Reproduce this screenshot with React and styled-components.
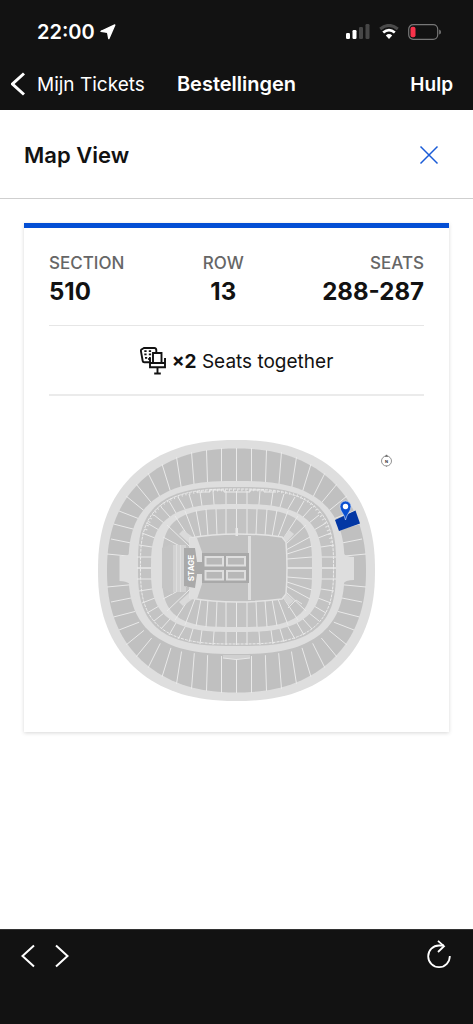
import React from "react";
import styled, { createGlobalStyle } from "styled-components";

const GlobalStyle = createGlobalStyle`
  * {
    box-sizing: border-box;
  }

  body {
    margin: 0;
    background: #fff;
    color: #121212;
    font-family: Inter, "Liberation Sans", sans-serif;
  }
`;

/* Stadium geometry */
const superellipse = (cx, cy, rx, ry, n) => {
  const points = [];
  for (let i = 0; i < 144; i++) {
    const t = (i / 144) * Math.PI * 2;
    const c = Math.cos(t);
    const s = Math.sin(t);
    const x = cx + rx * Math.sign(c) * Math.abs(c) ** (2 / n);
    const y = cy + ry * Math.sign(s) * Math.abs(s) ** (2 / n);
    points.push(`${x.toFixed(2)},${y.toFixed(2)}`);
  }
  return `M${points.join("L")}Z`;
};

// aisles of the upper right quarter: outer x, outer y, inner x, inner y
const upperAisles = [
  [236.5, 448, 236.5, 481],
  [251.5, 448, 251.5, 481],
  [266.5, 450, 265.5, 482],
  [281.5, 452, 279, 484],
  [296.5, 457, 292, 486],
  [311, 464, 303, 490],
  [325, 473, 314, 495],
  [337, 484, 323, 501],
  [347, 496, 331, 509],
  [354, 511, 336, 518],
  [359.5, 524, 340, 529],
  [362, 539, 342, 543],
  [366, 554, 345, 556],
];

const middleAisles = [
  [236.5, 491, 236.5, 504],
  [247, 491, 247, 504],
  [260, 491, 259, 504],
  [273, 492, 271, 506],
  [284, 494, 280, 507],
  [295, 497, 288, 509],
  [304, 501, 297, 513],
  [312, 507, 303, 517],
  [319, 515, 309, 523],
  [326, 523, 314, 530],
  [331, 533, 318, 538],
  [334, 545, 321, 547],
  [336, 557, 322, 557],
  [336, 568, 322, 568],
];

const lowerAisles = [
  [236.5, 509, 236.5, 536],
  [247, 509, 247, 536],
  [257, 509, 256, 535],
  [267, 509, 265, 536],
  [277, 510, 272, 537],
  [288, 511, 278, 537],
  [298, 516, 283, 539],
  [306, 525, 285, 545],
  [310, 537, 286, 550],
  [312, 546, 287, 554],
  [312, 557, 287, 559],
  [312, 568, 287, 568],
];

// the inner end runs on a little, under the ring that is drawn next
const toPath = (aisles) =>
  aisles
    .map(([x1, y1, x2, y2]) => `M${x1} ${y1}L${x2 + (x2 - x1) * 0.12} ${y2 + (y2 - y1) * 0.12}`)
    .join("");

const Aisles = ({ list, axis, leftList = list }) => (
  <g fill="none" stroke="#e9e9e9" strokeWidth="1">
    <path d={toPath(list)} />
    <path d={toPath(list)} transform={`translate(0 ${axis * 2}) scale(1 -1)`} />
    <path d={toPath(leftList)} transform="translate(473 0) scale(-1 1)" />
    <path d={toPath(leftList)} transform={`translate(473 ${axis * 2}) scale(-1 -1)`} />
  </g>
);

const StadiumMap = () => (
  <MapSvg viewBox="49 396 375 336" role="img" aria-label="Stadium map">
    <path d={superellipse(236.5, 570.5, 138.5, 130.5, 2.3)} fill="#dedede" />

    {/* upper tier */}
    <path d={superellipse(236.5, 570.5, 129.5, 122, 2.25)} fill="#c0c0c0" />
    <Aisles list={upperAisles} axis={570.5} />
    <path d={superellipse(236.5, 567.5, 108, 86.5, 2.7)} fill="#dedede" />
    <path
      d="M130 553L128 555Q127 556 119.500 556V581Q126 581 130 584L136 602H337L343 584Q345 580 354 580V557Q346 557 343 553L338 540H135Z"
      fill="#dedede"
    />
    <path d="M223 655H250V658Q236 660 223 658Z" fill="#d0d0d0" />
    <path d="M223 658Q236 661 250 658" fill="none" stroke="#e8e8e8" />

    {/* middle tier */}
    <path d={superellipse(237, 566.5, 99, 79.500, 2.95)} fill="#c3c3c3" />
    <path
      d={superellipse(237, 566.5, 96.5, 77.5, 2.95)}
      fill="none"
      stroke="#ececec"
      strokeDasharray="3 1"
    />
    <path
      d="M146 530C152 512 162 501 180 496C195 491 213 490 237 490C262 490 281 490 298 496C316 503 328 522 333 549"
      fill="none"
      stroke="#e6e6e6"
      strokeWidth="2.5"
      strokeDasharray="1 3"
    />
    <path d="M196 492H210V490H224V492H250V490H264V492H276" fill="none" stroke="#ececec" strokeWidth="1" />
    <Aisles list={middleAisles} axis={568} />
    <path d={superellipse(236.5, 568, 85.5, 64, 2.95)} fill="#dedede" />

    {/* lower tier */}
    <path d={superellipse(237, 568, 75, 59, 3.3)} fill="#c3c3c3" />
    <Aisles list={lowerAisles} axis={568} leftList={lowerAisles.slice(0, 9)} />
    <path d="M162 548L173 543V594L162 588Z" fill="#c5c5c5" />
    <path d="M173 545H186V592H173Z" fill="#d2d2d2" />
    <path d="M176.500 545V592M180.500 545V592" stroke="#dedede" />
    <path d="M179 534L183 530L194 538L190 544Z" fill="#dadada" />
    <path d="M179 602L183 606L194 598L190 592Z" fill="#dadada" />
    <path d="M283 538L289 530L294 534L287 542Z" fill="#dadada" />
    <path d="M283 598L289 605L294 601L287 594Z" fill="#d6d6d6" />
    <path d="M288 608L296 600L302 604" fill="none" stroke="#e6e6e6" />

    {/* pitch */}
    <path
      d="M190 538Q212 534 237 534Q262 534 282 537L286 542Q288 568 286 594L282 599Q260 602 237 602Q212 602 190 598Z"
      fill="#c0c0c0"
      stroke="#e3e3e3"
      strokeWidth="1.5"
    />
    <path d="M190 538H197L202 552V584L197 599H190Z" fill="#dedede" />
    <path d="M248 536H251V600H248Z" fill="#dedede" />
    <path d="M235.500 528H238V536H235.500Z" fill="#e6e6e6" />

    {/* stage and floor blocks */}
    <path d="M184 548L195 548L197 562H202V553H249V583H202V574H197L195 588L184 586Z" fill="#a9a9a9" />
    <g fill="#b8b8b8" stroke="#dedede" strokeWidth="2">
      <path d="M205.500 557H223V565.500H205.500Z" />
      <path d="M227 557H245V565.500H227Z" />
      <path d="M205.500 571H223V579.500H205.500Z" />
      <path d="M227 571H245V579.500H227Z" />
    </g>
    <StageText transform="translate(193.500 568) rotate(-90)">STAGE</StageText>

    {/* booked seats */}
    <path d="M335 520L355.500 510.500L360 523.500L339 531Z" fill="#0337a4" />
    <path
      d="M345.500 520C344.500 514 340 511.500 340 506.500A5.500 5.500 0 0 1 351 506.500C351 511.500 346.500 514 345.500 520Z"
      fill="#0a50d0"
      stroke="#dbe6fa"
      strokeWidth="0.6"
    />
    <circle cx="345.500" cy="506.500" r="2.700" fill="#fff" />

    {/* compass */}
    <circle cx="386.500" cy="461" r="5" fill="none" stroke="#777" strokeWidth="0.8" />
    <path d="M385.200 456.500L386.500 454.800L387.800 456.500ZM386.500 465.500V467" fill="#555" stroke="#777" strokeWidth="0.6" />
    <CompassText x="386.500" y="462.500">N</CompassText>
  </MapSvg>
);

/* Icons */
const LocationIcon = () => (
  <svg width="16" height="16" viewBox="0 0 16 16" aria-hidden="true">
    <path
      d="M14.800 1L8.800 14.600L7.600 8.400L1 7.300Z"
      fill="#fff"
      stroke="#fff"
      strokeWidth="1.400"
      strokeLinejoin="round"
    />
  </svg>
);

const SignalIcon = () => (
  <svg width="24" height="16" viewBox="0 0 24 16" aria-hidden="true">
    <rect x="0" y="9" width="4" height="6" rx="1.200" fill="#fff" />
    <rect x="6.500" y="6" width="4" height="9" rx="1.200" fill="#fff" />
    <rect x="13" y="3" width="4" height="12" rx="1.200" fill="#464646" />
    <rect x="19.500" y="0" width="4" height="15" rx="1.200" fill="#464646" />
  </svg>
);

const WifiIcon = () => (
  <svg width="20" height="16" viewBox="0 0 20 16" aria-hidden="true">
    <path d="M1.200 5Q10 -2.200 18.800 5" fill="none" stroke="#4a4a4a" strokeWidth="3" />
    <path d="M4.200 8.500Q10 3.800 15.800 8.500" fill="none" stroke="#fff" strokeWidth="2.800" />
    <path d="M6.800 11.400Q10 8.800 13.200 11.400L10 15Z" fill="#fff" />
  </svg>
);

const BatteryIcon = () => (
  <svg width="34" height="16" viewBox="0 0 34 16" aria-hidden="true">
    <rect x="0.700" y="0.700" width="29" height="14.600" rx="4.500" fill="none" stroke="#777" strokeWidth="1.200" />
    <rect x="2.500" y="2.800" width="5" height="10.400" rx="2" fill="#f8324a" />
    <path d="M31.200 5.500Q33 6 33 8T31.200 10.500Z" fill="#777" />
  </svg>
);

const SeatsIcon = () => (
  <svg width="26" height="28" viewBox="0 0 26 28" fill="none" stroke="#121212" strokeWidth="1.900" aria-hidden="true">
    <path d="M10 15.300H4.200Q2.900 15.300 2.700 14L0.900 3.800Q0.800 2.600 2 2.200L4 1H14.500Q16 1 16.300 3V5" />
    <path
      d="M4.300 3.200H6.600V5H4.300ZM8.800 3.200H11.100V5H8.800ZM4.300 6.500H6.600V8.300H4.300ZM8.800 6.500H11.100V8.300H8.800ZM5 9.900H7.200V11.700H5ZM9 9.900H10.800V11.700H9Z"
      fill="#121212"
      stroke="none"
    />
    <path d="M13 15.500V6H21.500V15.500" />
    <path d="M8.200 12H10V20.300H25V12H26M10 16H25M17.500 20.300V26.200M14.200 26.500H20.800" />
  </svg>
);

const Chevron = ({ left, weight = 2 }) => (
  <svg width="14" height="24" viewBox="0 0 14 24" aria-hidden="true">
    <path
      d={left ? "M13 1.500L1.500 12L13 22.500" : "M1 1.500L12.500 12L1 22.500"}
      fill="none"
      stroke="#fff"
      strokeWidth={weight}
    />
  </svg>
);

const App = () => (
  <>
    <GlobalStyle />
    <Page>
      <TopBar>
        <StatusBar>
          <Clock>
            22:00
            <LocationIcon />
          </Clock>
          <StatusIcons>
            <SignalIcon />
            <WifiIcon />
            <BatteryIcon />
          </StatusIcons>
        </StatusBar>
        <NavBar>
          <BackLink href="#tickets">
            <Chevron left weight={3} />
            Mijn Tickets
          </BackLink>
          <NavTitle>Bestellingen</NavTitle>
          <HelpLink href="#help">Hulp</HelpLink>
        </NavBar>
      </TopBar>

      <Header>
        <Title>Map View</Title>
        <IconButton type="button" aria-label="Close">
          <svg width="20" height="20" viewBox="0 0 20 20" aria-hidden="true">
            <path d="M1.500 1.500L18.500 18.500M18.500 1.500L1.500 18.500" stroke="#1a5bd7" strokeWidth="1.500" />
          </svg>
        </IconButton>
      </Header>

      <Content>
        <Card>
          <Details>
            <Detail>
              <Label>SECTION</Label>
              <Value>510</Value>
            </Detail>
            <Detail $align="center">
              <Label>ROW</Label>
              <Value>13</Value>
            </Detail>
            <Detail $align="right">
              <Label>SEATS</Label>
              <Value>288-287</Value>
            </Detail>
          </Details>
          <Together>
            <SeatsIcon />
            <span>
              <strong>×2</strong> Seats together
            </span>
          </Together>
          <StadiumMap />
        </Card>
      </Content>

      <BottomBar>
        <BottomGroup>
          <IconButton type="button" aria-label="Previous page">
            <Chevron left />
          </IconButton>
          <IconButton type="button" aria-label="Next page">
            <Chevron />
          </IconButton>
        </BottomGroup>
        <IconButton type="button" aria-label="Reload">
          <svg width="24" height="28" viewBox="0 0 24 28" fill="none" stroke="#fff" strokeWidth="1.800" aria-hidden="true">
            <path d="M22.800 16A10.800 10.800 0 1 1 12 5.500H17" />
            <path d="M11 0.800L17 6.200L11 12" />
          </svg>
        </IconButton>
      </BottomBar>
    </Page>
  </>
);

export default App;

/* Styled Components */
const Page = styled.div`
  min-height: 100vh;
  display: flex;
  flex-direction: column;
`;

const TopBar = styled.div`
  background: #121212;
  color: #fff;
`;

const StatusBar = styled.div`
  display: flex;
  align-items: center;
  justify-content: space-between;
  height: 60px;
  padding: 4px 31px 0 37px;
`;

const Clock = styled.div`
  display: flex;
  align-items: center;
  gap: 5px;
  font-size: 20px;
  font-weight: 600;
`;

const StatusIcons = styled.div`
  display: flex;
  align-items: center;
  gap: 9px;
`;

const NavBar = styled.nav`
  display: grid;
  grid-template-columns: 1fr auto 1fr;
  align-items: center;
  height: 50px;
  padding: 0 11px 2px;
  font-size: 20px;
`;

const BackLink = styled.a`
  display: flex;
  align-items: center;
  gap: 12px;
  color: #fff;
  font-size: 19px;
  text-decoration: none;
  white-space: nowrap;
`;

const NavTitle = styled.span`
  font-weight: 600;
`;

const HelpLink = styled.a`
  justify-self: end;
  padding-right: 9px;
  color: #fff;
  font-size: 19px;
  font-weight: 600;
  text-decoration: none;
`;

const Header = styled.header`
  display: flex;
  align-items: center;
  justify-content: space-between;
  height: 89px;
  padding: 1px 34px 0 24px;
  border-bottom: 1px solid #cfcfcf;
`;

const Title = styled.h1`
  margin: 0;
  font-size: 22px;
  font-weight: 600;
`;

const IconButton = styled.button`
  display: flex;
  padding: 0;
  border: 0;
  background: none;
  cursor: pointer;
`;

const Content = styled.main`
  flex: 1;
  padding: 24px;
`;

const Card = styled.section`
  padding: 0 25px;
  border-top: 5px solid #034ed4;
  background: #fff;
  box-shadow: 0 1px 4px rgba(0, 0, 0, 0.16);
`;

const Details = styled.div`
  display: flex;
  justify-content: space-between;
  padding: 24px 0 15px;
  border-bottom: 1px solid #e6e6e6;
`;

const Detail = styled.div`
  text-align: ${({ $align }) => $align || "left"};
`;

const Label = styled.div`
  color: #666;
  font-size: 17px;
  font-weight: 500;
  line-height: 22px;
`;

const Value = styled.div`
  font-size: 24px;
  font-weight: 700;
  line-height: 36px;
`;

const Together = styled.div`
  display: flex;
  align-items: center;
  justify-content: center;
  gap: 6px;
  height: 70px;
  padding-top: 2px;
  border-bottom: 2px solid #ebebeb;
  font-size: 19px;

  strong {
    font-weight: 700;
  }
`;

const MapSvg = styled.svg`
  display: block;
  width: 100%;
`;

const StageText = styled.text`
  fill: #fff;
  font-family: Inter, sans-serif;
  font-size: 8px;
  font-weight: 700;
  text-anchor: middle;
`;

const CompassText = styled.text`
  fill: #333;
  font-family: Inter, sans-serif;
  font-size: 4px;
  font-weight: 700;
  text-anchor: middle;
`;

const BottomBar = styled.footer`
  display: flex;
  align-items: flex-start;
  justify-content: space-between;
  height: 95px;
  padding: 10px 22px 0 21px;
  border-top: 1px solid #333;
  background: #121212;
`;

const BottomGroup = styled.div`
  display: flex;
  gap: 20px;
  padding-top: 4px;
`;
